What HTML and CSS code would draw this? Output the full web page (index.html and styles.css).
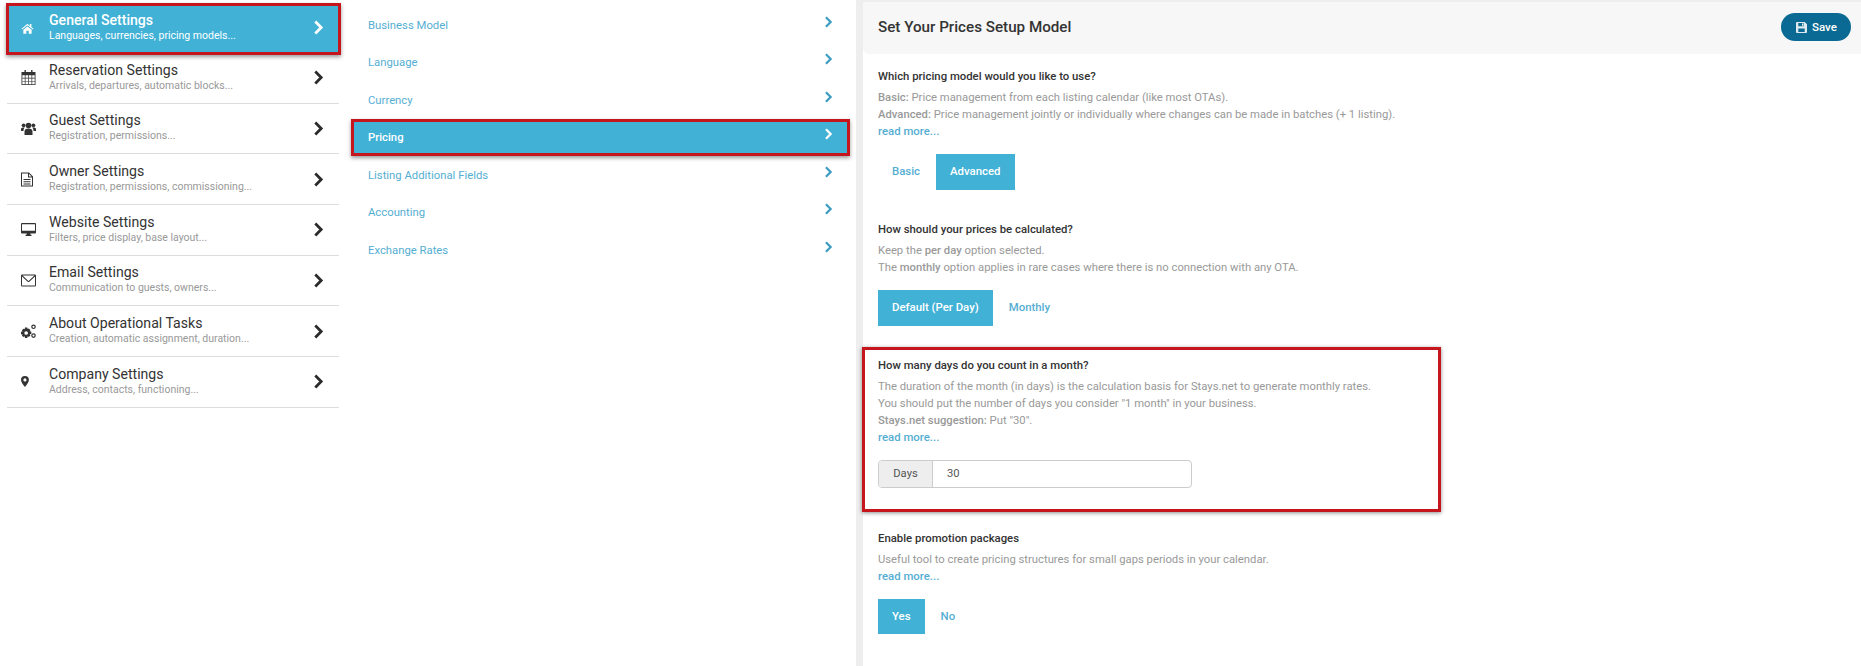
FILE: index.html
```html
<!DOCTYPE html>
<html lang="en">
<head>
<meta charset="utf-8">
<title>Set Your Prices Setup Model</title>
<link rel="stylesheet" href="styles.css">
</head>
<body>
<div class="page">
  <nav class="menu">
    <a class="menu-row active">
      <svg class="menu-icon" viewBox="0 0 16 14"><path d="M8 1.200 .6 7.400l.8.9L8 2.900l6.600 5.400.8-.9-2.600-2.100V1.600h-1.900v2.200zM2.900 8.600v4.900h3.600V9.900h3v3.600h3.600V8.600L8 4.400z"/></svg>
      <span class="menu-text"><b>General Settings</b><small>Languages, currencies, pricing models...</small></span>
      <svg class="chev" viewBox="0 0 10 14"><path d="M2 1.500 7.500 7 2 12.500" /></svg>
    </a>
    <a class="menu-row">
      <svg class="menu-icon" viewBox="0 0 14 15"><path fill-rule="evenodd" d="M3 0h1.400v2h5.200V0H11v2h3v13H0V2h3zM.8 5.300v2.450h2.500V5.300zm3.200 0v2.450h2.600V5.300zm3.300 0v2.450h2.700V5.300zm3.400 0v2.450h2.500V5.300zM.8 8.450v2.450h2.500V8.450zm3.200 0v2.450h2.600V8.450zm3.300 0v2.450h2.700V8.450zm3.400 0v2.450h2.500V8.450zM.8 11.600v2.600h2.500v-2.600zm3.200 0v2.600h2.600v-2.600zm3.300 0v2.600h2.700v-2.600zm3.400 0v2.600h2.500v-2.600z"/></svg>
      <span class="menu-text"><b>Reservation Settings</b><small>Arrivals, departures, automatic blocks...</small></span>
      <svg class="chev" viewBox="0 0 10 14"><path d="M2 1.500 7.500 7 2 12.500" /></svg>
    </a>
    <a class="menu-row">
      <svg class="menu-icon" viewBox="0 0 15 14"><circle cx="7.500" cy="4" r="2.800"/><circle cx="2.600" cy="3.800" r="1.900"/><circle cx="12.400" cy="3.800" r="1.900"/><path d="M3.500 13.500V10c0-2 1.500-3 4-3s4 1 4 3v3.500zM0 9.500V7.500C0 6.500 1 6 2.600 6c.5 0 .9.100 1.200.2-.9.7-1.300 1.800-1.300 3.300zM15 9.500V7.500C15 6.500 14 6 12.400 6c-.5 0-.9.100-1.200.2.900.7 1.300 1.800 1.300 3.300z"/></svg>
      <span class="menu-text"><b>Guest Settings</b><small>Registration, permissions...</small></span>
      <svg class="chev" viewBox="0 0 10 14"><path d="M2 1.500 7.500 7 2 12.500" /></svg>
    </a>
    <a class="menu-row">
      <svg class="menu-icon" viewBox="0 0 15 15" preserveAspectRatio="xMinYMid"><path fill-rule="evenodd" d="M0 .5h8l4 4v10H0zM1 1.500v12h10V5.500H7v-4zm7 .4V4.500h2.600zM2.500 7h7v1h-7zm0 2.200h7v1h-7zm0 2.200h7v1h-7z"/></svg>
      <span class="menu-text"><b>Owner Settings</b><small>Registration, permissions, commissioning...</small></span>
      <svg class="chev" viewBox="0 0 10 14"><path d="M2 1.500 7.500 7 2 12.500" /></svg>
    </a>
    <a class="menu-row">
      <svg class="menu-icon" viewBox="0 0 15 13"><path fill-rule="evenodd" d="M1 0h13a1 1 0 0 1 1 1v8.500a1 1 0 0 1-1 1H9.200l.3 1.300h1v1.200h-6v-1.200h1l.3-1.300H1a1 1 0 0 1-1-1V1a1 1 0 0 1 1-1zm0 1.200v6.600h13V1.200z"/></svg>
      <span class="menu-text"><b>Website Settings</b><small>Filters, price display, base layout...</small></span>
      <svg class="chev" viewBox="0 0 10 14"><path d="M2 1.500 7.500 7 2 12.500" /></svg>
    </a>
    <a class="menu-row">
      <svg class="menu-icon" viewBox="0 0 15 12"><path fill-rule="evenodd" d="M1.200 0h12.600A1.200 1.200 0 0 1 15 1.200v9.600a1.200 1.200 0 0 1-1.200 1.200H1.200A1.200 1.200 0 0 1 0 10.800V1.200A1.200 1.200 0 0 1 1.200 0zM1 2v8.800c0 .1.100.2.200.2h12.600c.1 0 .2-.1.200-.2V2L8.300 7.200a1.200 1.200 0 0 1-1.600 0zm.6-1 5.800 5.400c.1.100.1.100.2 0L13.400 1z"/></svg>
      <span class="menu-text"><b>Email Settings</b><small>Communication to guests, owners...</small></span>
      <svg class="chev" viewBox="0 0 10 14"><path d="M2 1.500 7.500 7 2 12.500" /></svg>
    </a>
    <a class="menu-row">
      <svg class="menu-icon" viewBox="0 0 15 14"><g transform="translate(-.6 .2) scale(1.150)"><path fill-rule="evenodd" d="M4 2.500h2l.3 1.300 1-.5 1.400 1.400-.6 1 1.400.3v2l-1.400.3.600 1-1.400 1.400-1-.6-.3 1.400H4l-.3-1.400-1 .6L1.300 9.500l.6-1L.5 8.200v-2l1.400-.3-.6-1 1.400-1.400 1 .5zM5 5.600a1.600 1.600 0 1 0 0 3.200 1.600 1.600 0 0 0 0-3.200z"/></g><path fill-rule="evenodd" d="M12.500 0a2.300 2.300 0 1 1 0 4.600 2.300 2.300 0 0 1 0-4.600zm0 1.200a1.100 1.100 0 1 0 0 2.200 1.100 1.100 0 0 0 0-2.200zM12.500 8.800a2.300 2.300 0 1 1 0 4.600 2.300 2.300 0 0 1 0-4.600zm0 1.200a1.100 1.100 0 1 0 0 2.200 1.100 1.100 0 0 0 0-2.200z"/></svg>
      <span class="menu-text"><b>About Operational Tasks</b><small>Creation, automatic assignment, duration...</small></span>
      <svg class="chev" viewBox="0 0 10 14"><path d="M2 1.500 7.500 7 2 12.500" /></svg>
    </a>
    <a class="menu-row">
      <svg class="menu-icon" viewBox="0 0 19 14" preserveAspectRatio="xMinYMid"><path fill-rule="evenodd" d="M5 0a5 5 0 0 1 5 5c0 2.900-3.300 6.500-5 9-1.700-2.500-5-6.100-5-9a5 5 0 0 1 5-5zm0 3a2 2 0 1 0 0 4 2 2 0 0 0 0-4z"/></svg>
      <span class="menu-text"><b>Company Settings</b><small>Address, contacts, functioning...</small></span>
      <svg class="chev" viewBox="0 0 10 14"><path d="M2 1.500 7.500 7 2 12.500" /></svg>
    </a>
  </nav>

  <nav class="submenu">
    <a class="sub-row">Business Model<svg class="sub-chev" viewBox="0 0 10 14"><path d="M2 1.500 7.500 7 2 12.500" /></svg></a>
    <a class="sub-row">Language<svg class="sub-chev" viewBox="0 0 10 14"><path d="M2 1.500 7.500 7 2 12.500" /></svg></a>
    <a class="sub-row">Currency<svg class="sub-chev" viewBox="0 0 10 14"><path d="M2 1.500 7.500 7 2 12.500" /></svg></a>
    <a class="sub-row active">Pricing<svg class="sub-chev" viewBox="0 0 10 14"><path d="M2 1.500 7.500 7 2 12.500" /></svg></a>
    <a class="sub-row">Listing Additional Fields<svg class="sub-chev" viewBox="0 0 10 14"><path d="M2 1.500 7.500 7 2 12.500" /></svg></a>
    <a class="sub-row">Accounting<svg class="sub-chev" viewBox="0 0 10 14"><path d="M2 1.500 7.500 7 2 12.500" /></svg></a>
    <a class="sub-row">Exchange Rates<svg class="sub-chev" viewBox="0 0 10 14"><path d="M2 1.500 7.500 7 2 12.500" /></svg></a>
  </nav>

  <main class="panel">
    <header class="panel-head">
      <h1>Set Your Prices Setup Model</h1>
      <button class="save" type="button">
        <svg viewBox="0 0 12 12"><path fill-rule="evenodd" d="M1 0h8.500L12 2.500V11a1 1 0 0 1-1 1H1a1 1 0 0 1-1-1V1a1 1 0 0 1 1-1zm1.500 1v3.500h6V1zM2.500 7v4h7V7zM6.500 1.500H8v2.500H6.500z"/></svg>
        Save
      </button>
    </header>

    <section class="block first">
      <h2>Which pricing model would you like to use?</h2>
      <p><strong>Basic:</strong> Price management from each listing calendar (like most OTAs).</p>
      <p><strong>Advanced:</strong> Price management jointly or individually where changes can be made in batches (+ 1 listing).</p>
      <a class="more">read more...</a>
      <div class="choices">
        <span class="choice">Basic</span>
        <span class="choice on">Advanced</span>
      </div>
    </section>

    <section class="block second">
      <h2>How should your prices be calculated?</h2>
      <p>Keep the <strong>per day</strong> option selected.</p>
      <p>The <strong>monthly</strong> option applies in rare cases where there is no connection with any OTA.</p>
      <div class="choices">
        <span class="choice on">Default (Per Day)</span>
        <span class="choice">Monthly</span>
      </div>
    </section>

    <section class="block marked">
      <h2>How many days do you count in a month?</h2>
      <p>The duration of the month (in days) is the calculation basis for Stays.net to generate monthly rates.</p>
      <p>You should put the number of days you consider "1 month" in your business.</p>
      <p><strong>Stays.net suggestion:</strong> Put "30".</p>
      <a class="more">read more...</a>
      <div class="field">
        <span class="field-label">Days</span>
        <span class="field-value">30</span>
      </div>
    </section>

    <section class="block last">
      <h2>Enable promotion packages</h2>
      <p>Useful tool to create pricing structures for small gaps periods in your calendar.</p>
      <a class="more">read more...</a>
      <div class="choices short">
        <span class="choice on">Yes</span>
        <span class="choice">No</span>
      </div>
    </section>
  </main>
</div>
</body>
</html>
```

FILE: styles.css
```css
* { box-sizing: border-box; }
html, body { margin: 0; height: 100%; overflow: hidden; background: #fff; }
body { font-family: Roboto, "Liberation Sans", sans-serif; color: #333; }

.page { display: flex; height: 666px; }

/* first column */
.menu { width: 335px; margin-left: 6px; padding-top: 3px; flex: none; }
.menu-row {
  display: flex; align-items: center; height: 50.67px;
  margin: 0 2px 0 1px; border-bottom: 1px solid #ddd;
  color: #333;
}
.menu-row.active {
  position: relative; height: 52px; margin: 0 0 -2px; padding-bottom: 2px;
  border: 3px solid #c5161d; background: #41b1d6; color: #fff;
  box-shadow: 0 2px 4px rgba(0,0,0,.4);
}
.menu-icon { width: 15px; height: 15px; margin-left: 14px; flex: none; fill: #333; }
.menu-row.active .menu-icon { fill: #fff; margin-left: 12px; width: 13px; }
.menu-text { display: flex; flex-direction: column; margin-left: 13px; flex: 1; }
.menu-row.active .menu-text { margin-left: 15px; }
.menu-text b { font-weight: 400; font-size: 14.1px; line-height: 16px; }
.menu-row.active .menu-text b { font-weight: 500; }
.menu-text small { font-size: 10.5px; line-height: 16px; color: #999; }
.menu-row.active .menu-text small { color: #fff; }
.chev { width: 11px; height: 15px; margin-right: 15px; flex: none; fill: none; stroke: #2b2b2b; stroke-width: 2.6; }
.menu-row.active .chev { stroke: #fff; margin: 0 14px 2px 0; }

/* second column */
.submenu { width: 499px; margin-left: 10px; padding-top: 6.25px; flex: none; }
.sub-row {
  display: flex; align-items: center; justify-content: space-between;
  height: 37.5px; padding: 0 14px; border: 3px solid transparent;
  font-size: 11.3px; color: #55aed2;
}
.sub-row.active {
  border-color: #c5161d; background: #41b1d6; color: #fff; font-weight: 500;
  box-shadow: 0 2px 4px rgba(0,0,0,.4);
}
.sub-chev { width: 9px; height: 12px; margin: 0 0 7px; fill: none; stroke: #3d9cc2; stroke-width: 2.6; }
.sub-row.active .sub-chev { stroke: #fff; }

/* settings panel */
.panel { flex: 1; margin-left: 6px; padding-top: 2px; border-left: 7px solid #eee; background: linear-gradient(#eee 2px, #fff 2px); }
.panel-head {
  display: flex; align-items: center; justify-content: space-between;
  height: 52px; padding: 0 10px 2px 15px; background: #f7f7f7; border-bottom-left-radius: 6px;
}
h1 { margin: 0; font-size: 15.2px; font-weight: 500; color: #333; }
.save {
  display: flex; align-items: center; gap: 5px; height: 28px; width: 70px; padding: 0 0 0 15px;
  border: 0; border-radius: 14px; background: #0b6a93; color: #fff;
  font: 500 11.5px Roboto, sans-serif;
}
.save svg { width: 11px; height: 11px; fill: #dfeaf0; }

.block { padding-left: 15px; }
h2 { margin: 0 0 4px; font-size: 11.35px; line-height: 17px; font-weight: 500; color: #333; }
p { margin: 0; font-size: 11.27px; line-height: 17px; color: #999; }
strong { font-weight: 500; }
.more { display: block; font-size: 11.4px; line-height: 17px; font-weight: 500; color: #55aed2; }

.choices { display: flex; gap: 2px; margin-top: 14.5px; }
.choices.short .choice { height: 35px; }
.choice {
  display: flex; align-items: center; height: 36px; padding: 0 14px 2px;
  font-size: 11.4px; font-weight: 500; color: #55aed2;
}
.choice.on { background: #41b1d6; color: #fff; }

.first { padding-top: 13.5px; }
.second { padding-top: 30.5px; }
.marked {
  margin: 21px 0 0 -1px; width: 579px; height: 165px;
  padding: 6.5px 0 0 13px; border: 3px solid #c5161d;
  box-shadow: 0 1px 4px rgba(0,0,0,.45);
}
.last { padding-top: 17.5px; }

.field {
  display: flex; width: 314px; height: 28px; margin-top: 14.5px;
  border: 1px solid #ccc; border-radius: 4px; font-size: 11.2px; line-height: 25px; color: #555;
}
.field-label { width: 54px; text-align: center; background: #eee; border-right: 1px solid #ccc; border-radius: 3px 0 0 3px; }
.field-value { padding-left: 14px; }
```
